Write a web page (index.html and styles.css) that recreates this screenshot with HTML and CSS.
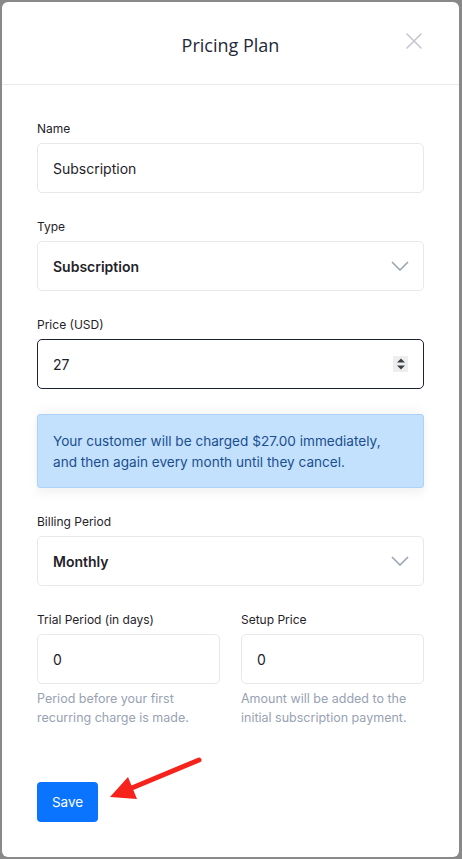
FILE: index.html
```html
<!DOCTYPE html>
<html>
<head>
<meta charset="utf-8">
<link rel="stylesheet" href="styles.css">
</head>
<body>
<div class="backdrop">
  <div class="modal">
    <div class="modal-header">
      <h2 class="modal-title">Pricing Plan</h2>
      <svg class="close" width="16" height="16" viewBox="0 0 16 16"><path d="M1 1L15 15M15 1L1 15" stroke="#c3c7cf" stroke-width="1.6" fill="none" stroke-linecap="round"/></svg>
    </div>
    <div class="modal-body">
      <div class="field">
        <label class="label">Name</label>
        <div class="input">Subscription</div>
      </div>
      <div class="field">
        <label class="label">Type</label>
        <div class="input select"><span>Subscription</span>
          <svg width="18" height="10" viewBox="0 0 18 10"><path d="M1 1L9 9L17 1" stroke="#9aa5b8" stroke-width="1.6" fill="none"/></svg>
        </div>
      </div>
      <div class="field">
        <label class="label">Price (USD)</label>
        <div class="input focus"><span>27</span>
          <span class="spinner"><svg width="10" height="14" viewBox="0 0 10 14"><path d="M1 5.5L5 1.5L9 5.5Z M1 8.5L5 12.5L9 8.5Z" fill="#3a3f47"/></svg></span>
        </div>
      </div>
      <div class="alert">Your customer will be charged $27.00 immediately, and then again every month until they cancel.</div>
      <div class="field">
        <label class="label">Billing Period</label>
        <div class="input select"><span>Monthly</span>
          <svg width="18" height="10" viewBox="0 0 18 10"><path d="M1 1L9 9L17 1" stroke="#9aa5b8" stroke-width="1.6" fill="none"/></svg>
        </div>
      </div>
      <div class="row">
        <div class="col">
          <label class="label">Trial Period (in days)</label>
          <div class="input">0</div>
          <p class="help">Period before your first recurring charge is made.</p>
        </div>
        <div class="col">
          <label class="label">Setup Price</label>
          <div class="input">0</div>
          <p class="help">Amount will be added to the initial subscription payment.</p>
        </div>
      </div>
      <div class="actions">
        <button class="btn">Save</button>
        <svg class="arrow" width="100" height="50" viewBox="0 0 100 50"><path d="M90 4L18 34" stroke="#f5231b" stroke-width="5" stroke-linecap="round" fill="none"/><path d="M1 41L19 21L28 43Z" fill="#f5231b"/></svg>
      </div>
    </div>
  </div>
</div>
</body>
</html>
```
FILE: styles.css
```css
* { box-sizing: border-box; }
html, body { margin: 0; padding: 0; }
body {
  background: #898989;
  font-family: Inter, "Noto Sans", sans-serif;
  color: #1f2329;
}
.backdrop {
  width: 462px;
  height: 859px;
  padding: 2px 3px 2px 2px;
}
.modal {
  background: #fff;
  border-radius: 6px;
  height: 855px;
  display: flex;
  flex-direction: column;
}
.modal-header {
  position: relative;
  height: 83px;
  border-bottom: 1px solid #e8eaee;
  display: flex;
  align-items: center;
  justify-content: center;
}
.modal-title {
  margin: 0;
  font-family: "Open Sans", sans-serif;
  font-weight: 400;
  font-size: 18px;
  color: #1f2937;
  padding-top: 3px;
}
.close {
  position: absolute;
  right: 37px;
  top: 31px;
}
.modal-body {
  padding: 33px 35px 35px 35px;
  display: flex;
  flex-direction: column;
}
.field { margin-bottom: 23px; }
.label {
  display: block;
  font-size: 12px;
  line-height: 21px;
  margin-bottom: 4px;
  color: #1f2329;
}
.input {
  height: 50px;
  border: 1px solid #e6e8ec;
  border-radius: 5px;
  padding: 0 15px;
  display: flex;
  align-items: center;
  justify-content: space-between;
  font-size: 14px;
  color: #1f2329;
}
.select span { font-weight: 600; }
.select svg { margin-right: -1px; }
.focus { border-color: #1c2230; }
.spinner {
  width: 15px;
  height: 16px;
  background: #eeeeee;
  display: flex;
  align-items: center;
  justify-content: center;
}
.alert {
  margin: 2px 0 23px;
  height: 74px;
  background: #c3e1fd;
  border: 1px solid #abd3fa;
  border-radius: 3px;
  padding: 16px 15px 15px;
  font-size: 13.6px;
  line-height: 21px;
  color: #1a4e8f;
  box-shadow: 0 6px 10px rgba(0,0,0,0.05), 0 -6px 10px rgba(0,0,0,0.03);
}
.row { display: flex; gap: 21px; }
.col { flex: 1; }
.help {
  margin: 5px 0 0;
  font-size: 12.5px;
  line-height: 19px;
  color: #98a2b3;
}
.actions {
  position: relative;
  margin-top: 55px;
}
.btn {
  width: 61px;
  height: 40px;
  border: 0;
  border-radius: 4px;
  background: #0a74ff;
  color: #fff;
  font-family: Inter, sans-serif;
  font-size: 13.5px;
  padding: 0;
}
.arrow {
  position: absolute;
  left: 72px;
  top: -26px;
}
```
